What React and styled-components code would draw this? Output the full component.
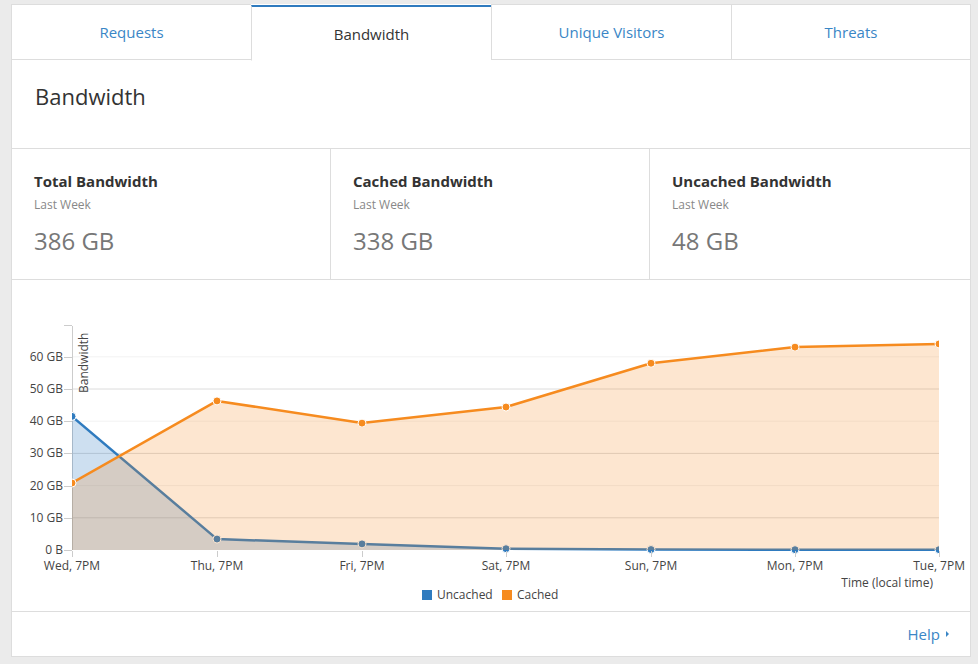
import React from 'react'
import styled, { createGlobalStyle } from 'styled-components';

const GlobalStyle = createGlobalStyle`
  body {
    margin: 0;
    background: #ebebeb;
    font-family: "Open Sans", "Liberation Sans", sans-serif;
    color: #333;
  }
`;

const Page = styled.div`
  padding: 4px 8px 8px 11px;
`;

const Panel = styled.div`
  width: 958px;
  background: #fff;
  border: 1px solid #dddddd;
  border-top: none;
`;

const Tabs = styled.div`
  display: grid;
  grid-template-columns: repeat(4, 1fr);
  margin: 0 -1px;
`;

const Tab = styled.div`
  display: flex;
  align-items: center;
  justify-content: center;
  font-size: 15px;
  color: ${props => props.active ? "#333" : "#3a86c6"};
  background: #fff;
  border-top: ${props => props.active ? "2px solid #2f7bbf" : "1px solid #dddddd"};
  border-left: 1px solid #dddddd;
  border-bottom: ${props => props.active ? "1px solid transparent" : "1px solid #dddddd"};
  height: ${props => props.active ? "53px" : "54px"};
  margin-top: ${props => props.active ? "1px" : "0"};
  &:last-child {
    border-right: 1px solid #dddddd;
  }
`;

const TitleBar = styled.div`
  height: 88px;
  box-sizing: border-box;
  padding: 20px 23px 0;
  border-bottom: 1px solid #dddddd;
  font-size: 22px;
  line-height: 30px;
  color: #333;
`;

const Stats = styled.div`
  display: grid;
  grid-template-columns: 318px 319px 1fr;
  border-bottom: 1px solid #dddddd;
`;

const Stat = styled.div`
  height: 130px;
  box-sizing: border-box;
  padding: 22px 22px 0;
  & + & {
    border-left: 1px solid #dddddd;
  }
`;

const StatTitle = styled.div`
  font-size: 15px;
  font-weight: 700;
  line-height: 20px;
  color: #333;
`;

const StatSub = styled.div`
  margin-top: 6px;
  font-size: 12px;
  line-height: 16px;
  color: #888;
`;

const StatValue = styled.div`
  margin-top: 12px;
  font-size: 24px;
  line-height: 32px;
  color: #777;
`;

const ChartArea = styled.div`
  height: 331px;
  border-bottom: 1px solid #dddddd;
  svg { display: block; }
`;

const Footer = styled.div`
  height: 44px;
  display: flex;
  align-items: center;
  justify-content: flex-end;
  padding-right: 21px;
`;

const HelpLink = styled.a`
  font-size: 15px;
  color: #3a86c6;
  text-decoration: none;
  display: flex;
  align-items: center;
  &::after {
    content: "";
    margin-left: 6px;
    width: 0;
    height: 0;
    border-top: 3px solid transparent;
    border-bottom: 3px solid transparent;
    border-left: 3px solid #3a86c6;
  }
`;

const xs = [72, 217, 362, 506, 651, 795, 939];
const labels = ["Wed, 7PM", "Thu, 7PM", "Fri, 7PM", "Sat, 7PM", "Sun, 7PM", "Mon, 7PM", "Tue, 7PM"];
const cached = [20.8, 46.3, 39.4, 44.4, 58.0, 63.0, 64.0];
const uncached = [41.5, 3.4, 1.9, 0.4, 0.15, 0.1, 0.1];
const BASE = 550;
const y = v => BASE - v * 3.22;

const linePath = vals => vals.map((v, i) => `${i ? "L" : "M"}${xs[i]},${y(v).toFixed(1)}`).join(" ");
const areaPath = vals => `${linePath(vals)} L${xs[6]},${BASE} L${xs[0]},${BASE} Z`;

const BLUE = "#2f7bbf";
const ORANGE = "#f68b1f";

const Series = ({ vals, color, fill }) => (
  <g>
    <path d={areaPath(vals)} fill={fill} />
    <path d={linePath(vals)} fill="none" stroke={color} strokeWidth="2.5" strokeLinejoin="round" />
    {vals.map((v, i) => (
      <circle key={i} cx={xs[i]} cy={y(v)} r="4" fill={color} stroke="#fff" strokeWidth="1" />
    ))}
  </g>
);

const Chart = () => (
  <svg width="958" height="331" viewBox="12 280 958 331" fontFamily="Open Sans, Liberation Sans, sans-serif" fontSize="12">
    <defs>
      <clipPath id="plot">
        <rect x="72" y="320" width="867" height="236" />
      </clipPath>
    </defs>
    {[10, 20, 30, 40, 50, 60].map(v => (
      <line key={v} x1="72" x2="939" y1={y(v)} y2={y(v)} stroke={v % 20 === 10 ? "#dcdcdc" : "#f2f2f2"} strokeWidth="1" />
    ))}
    <line x1="72.5" x2="72.5" y1="326" y2="550" stroke="#cccccc" />
    {[0, 10, 20, 30, 40, 50, 60, 70].map(v => (
      <line key={v} x1="64" x2="72" y1={Math.round(y(v)) + 0.5} y2={Math.round(y(v)) + 0.5} stroke="#cccccc" />
    ))}
    {[0, 10, 20, 30, 40, 50, 60].map(v => (
      <text key={v} x="63" y={y(v) + 4} textAnchor="end" fill="#444">{v === 0 ? "0 B" : `${v} GB`}</text>
    ))}
    <g clipPath="url(#plot)">
      <Series vals={uncached} color={BLUE} fill="rgba(47,123,191,0.24)" />
      <Series vals={cached} color={ORANGE} fill="rgba(246,139,31,0.21)" />
    </g>
    {xs.map((x, i) => (
      <g key={i}>
        <line x1={x + 0.5} x2={x + 0.5} y1="551" y2="557" stroke="#cccccc" />
        <text x={i === 6 ? 965 : x} y="570" textAnchor={i === 6 ? "end" : "middle"} fill="#444">{labels[i]}</text>
      </g>
    ))}
    <text transform="translate(88,393) rotate(-90)" fill="#444">Bandwidth</text>
    <text x="933" y="587" textAnchor="end" fill="#444">Time (local time)</text>
    <rect x="422" y="590" width="10" height="10" fill={BLUE} />
    <text x="437" y="599" fill="#444">Uncached</text>
    <rect x="502" y="590" width="10" height="10" fill={ORANGE} />
    <text x="517" y="599" fill="#444">Cached</text>
  </svg>
);

const stats = [
  { title: "Total Bandwidth", value: "386 GB" },
  { title: "Cached Bandwidth", value: "338 GB" },
  { title: "Uncached Bandwidth", value: "48 GB" },
];

export default function App() {
  return (
    <Page>
      <GlobalStyle />
      <Panel>
        <Tabs>
          <Tab>Requests</Tab>
          <Tab active>Bandwidth</Tab>
          <Tab>Unique Visitors</Tab>
          <Tab>Threats</Tab>
        </Tabs>
        <TitleBar>Bandwidth</TitleBar>
        <Stats>
          {stats.map(s => (
            <Stat key={s.title}>
              <StatTitle>{s.title}</StatTitle>
              <StatSub>Last Week</StatSub>
              <StatValue>{s.value}</StatValue>
            </Stat>
          ))}
        </Stats>
        <ChartArea>
          <Chart />
        </ChartArea>
        <Footer>
          <HelpLink href="#">Help</HelpLink>
        </Footer>
      </Panel>
    </Page>
  );
}
